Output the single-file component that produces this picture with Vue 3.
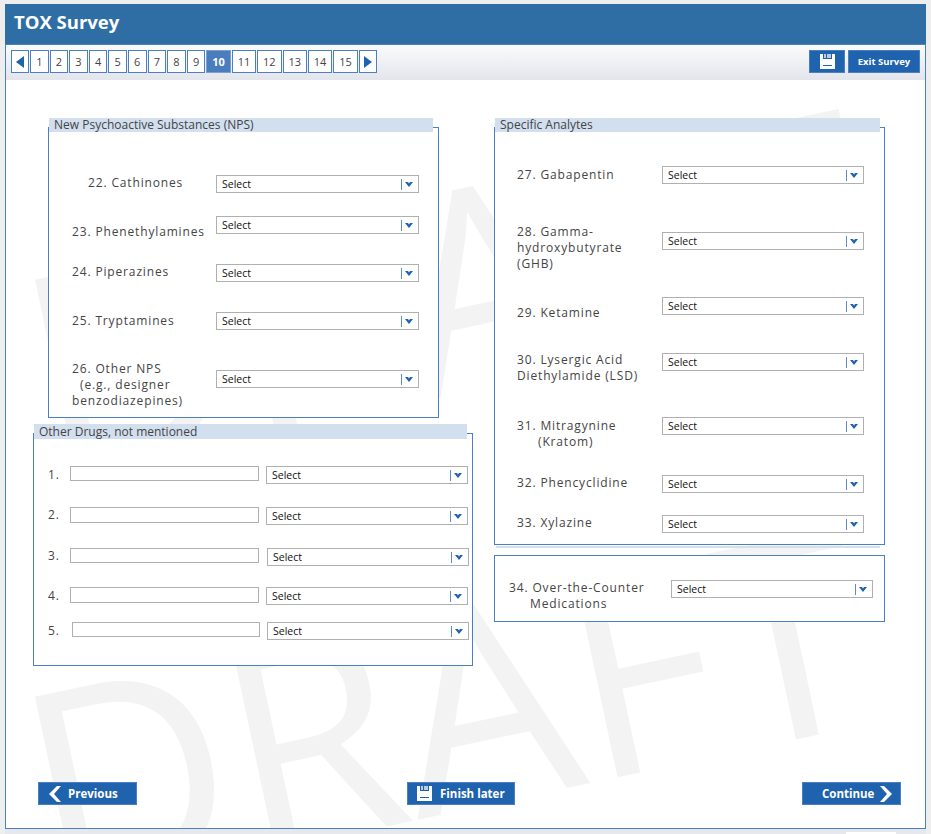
<script setup>
const S = 18
function place(rows, start, h = S) {
  let cur = start
  return rows.map((r) => {
    const lh = (r.lines ? r.lines.length : 1) * 16
    const top = Math.min(r.y, r.ly)
    const bottom = Math.max(r.y + h, r.ly + lh)
    const out = { ...r, gap: top - cur, sTop: r.y - top, lTop: r.ly - top }
    cur = bottom
    return out
  })
}
const nps = place([
  { y: 175, ly: 175, lines: [['22. Cathinones', 39]] },
  { y: 216, ly: 224, lines: [['23. Phenethylamines', 23]] },
  { y: 264, ly: 264, lines: [['24. Piperazines', 23]] },
  { y: 312, ly: 313, lines: [['25. Tryptamines', 23]] },
  { y: 370, ly: 361, lines: [['26. Other NPS', 23], ['(e.g., designer', 31], ['benzodiazepines)', 23]] },
], 132)
const analytes = place([
  { y: 166, ly: 167, lines: [['27. Gabapentin', 22]] },
  { y: 232, ly: 224, lines: [['28. Gamma-', 22], ['hydroxybutyrate', 22], ['(GHB)', 22]] },
  { y: 297, ly: 305, lines: [['29. Ketamine', 22]] },
  { y: 353, ly: 352, lines: [['30. Lysergic Acid', 22], ['Diethylamide (LSD)', 22]] },
  { y: 417, ly: 418, lines: [['31. Mitragynine', 22], ['(Kratom)', 43]] },
  { y: 475, ly: 475, lines: [['32. Phencyclidine', 22]] },
  { y: 515, ly: 515, lines: [['33. Xylazine', 22]] },
], 132)
const others = place([
  { n: '1.', y: 466, ly: 467, ih: 15, ix: 0, sx: 7, iw: 189 },
  { n: '2.', y: 507, ly: 507, ih: 16, ix: 0, sx: 7, iw: 189 },
  { n: '3.', y: 548, ly: 548, ih: 15, ix: 0, sx: 8, iw: 189 },
  { n: '4.', y: 587, ly: 588, ih: 16, ix: 0, sx: 7, iw: 189 },
  { n: '5.', y: 622, ly: 623, ih: 15, ix: 2, sx: 7, iw: 188 },
], 439)
const pages = [1, 2, 3, 4, 5, 6, 7, 8, 9, 10, 11, 12, 13, 14, 15]
</script>

<template>
  <div class="page">
    <div class="frame">
      <header class="head"><h1>TOX Survey</h1></header>
      <div class="tools">
        <nav class="pager">
          <button class="pg arrow" aria-label="Previous page">
            <svg width="8" height="12" viewBox="0 0 8 12"><path d="M8 0V12L0 6Z" fill="#1f62ad" /></svg>
          </button>
          <button
            v-for="p in pages"
            :key="p"
            class="pg"
            :class="{ wide: p > 9, on: p === 10 }"
          >{{ p }}</button>
          <button class="pg arrow" aria-label="Next page">
            <svg width="8" height="12" viewBox="0 0 8 12"><path d="M0 0V12L8 6Z" fill="#1f62ad" /></svg>
          </button>
        </nav>
        <div class="acts">
          <button class="act save" aria-label="Save">
            <svg width="15" height="15" viewBox="0 0 15 15">
              <path d="M0 0H3V5H12V0H15V15H0Z" fill="#fff" />
              <path d="M4 0H6V4H4ZM7 0H11V4H7Z" fill="#b9cce4" />
              <path d="M3 11H12V12H3Z" fill="#1f62ad" />
            </svg>
          </button>
          <button class="act exit">Exit Survey</button>
        </div>
      </div>

      <main class="body">
        <span class="mark mark-a" aria-hidden="true">DRAFT</span>
        <span class="mark mark-b" aria-hidden="true">DRAFT</span>

        <div class="cols">
          <div class="col">
            <section class="box box-nps">
              <div class="legend">New Psychoactive Substances (NPS)</div>
              <div
                v-for="r in nps"
                :key="r.y"
                class="row"
                :style="{ marginTop: r.gap + 'px' }"
              >
                <div class="lab lab-nps" :style="{ marginTop: r.lTop + 'px' }">
                  <div v-for="l in r.lines" :key="l[0]" :style="{ paddingLeft: l[1] + 'px' }">{{ l[0] }}</div>
                </div>
                <div class="sel sel-wide" :style="{ marginTop: r.sTop + 'px' }">
                  <span>Select</span><i class="div"></i>
                  <svg width="8" height="5" viewBox="0 0 8 5"><path d="M0 0H3L4 1.5L5 0H8L4 5Z" fill="#1f62ad" /></svg>
                </div>
              </div>
            </section>

            <section class="box box-other">
              <div class="legend legend-other">Other Drugs, not mentioned</div>
              <div
                v-for="r in others"
                :key="r.n"
                class="row"
                :style="{ marginTop: r.gap + 'px' }"
              >
                <div class="num" :style="{ marginTop: r.lTop + 'px' }">{{ r.n }}</div>
                <input
                  class="txt"
                  type="text"
                  :style="{ height: r.ih + 'px', width: r.iw + 'px', marginLeft: r.ix + 'px', marginTop: r.sTop + 'px' }"
                />
                <div class="sel" :style="{ marginLeft: r.sx + 'px', marginTop: r.sTop + 'px' }">
                  <span>Select</span><i class="div"></i>
                  <svg width="8" height="5" viewBox="0 0 8 5"><path d="M0 0H3L4 1.5L5 0H8L4 5Z" fill="#1f62ad" /></svg>
                </div>
              </div>
            </section>
          </div>

          <div class="col">
            <section class="box box-ana">
              <div class="legend legend-ana">Specific Analytes</div>
              <div
                v-for="r in analytes"
                :key="r.y"
                class="row"
                :style="{ marginTop: r.gap + 'px' }"
              >
                <div class="lab lab-ana" :style="{ marginTop: r.lTop + 'px' }">
                  <div v-for="l in r.lines" :key="l[0]" :style="{ paddingLeft: l[1] + 'px' }">{{ l[0] }}</div>
                </div>
                <div class="sel" :style="{ marginTop: r.sTop + 'px' }">
                  <span>Select</span><i class="div"></i>
                  <svg width="8" height="5" viewBox="0 0 8 5"><path d="M0 0H3L4 1.5L5 0H8L4 5Z" fill="#1f62ad" /></svg>
                </div>
              </div>
            </section>
            <div class="sliver"></div>
            <section class="box box-otc">
              <div class="lab lab-otc">
                <div class="otc1">34. Over-the-Counter</div>
                <div class="otc2">Medications</div>
              </div>
              <div class="sel sel-otc">
                <span>Select</span><i class="div"></i>
                <svg width="8" height="5" viewBox="0 0 8 5"><path d="M0 0H3L4 1.5L5 0H8L4 5Z" fill="#1f62ad" /></svg>
              </div>
            </section>
          </div>
        </div>

        <div class="nav">
          <button class="btn prev">
            <svg width="12" height="16" viewBox="0 0 12 16"><path d="M8 0H12L5 8L12 16H8L0 8Z" fill="#fff" /></svg>
            <span>Previous</span>
          </button>
          <button class="btn later">
            <svg width="15" height="15" viewBox="0 0 15 15">
              <path d="M0 0H3V5H12V0H15V15H0Z" fill="#fff" />
              <path d="M4 0H6V4H4ZM7 0H11V4H7Z" fill="#b9cce4" />
              <path d="M3 11H12V12H3Z" fill="#1f62ad" />
            </svg>
            <span>Finish later</span>
          </button>
          <button class="btn next">
            <span>Continue</span>
            <svg width="12" height="16" viewBox="0 0 12 16"><path d="M4 0H0L7 8L0 16H4L12 8Z" fill="#fff" /></svg>
          </button>
        </div>
      </main>
      <footer class="foot"><i class="tab"></i></footer>
    </div>
  </div>
</template>

<style>
html, body { margin: 0; background: #eeeeee; }
</style>

<style scoped>
.page {
  width: 931px;
  height: 834px;
  overflow: hidden;
  padding: 4px 0 0 5px;
  box-sizing: border-box;
  font-family: "Open Sans", "Liberation Sans", sans-serif;
}
.frame {
  width: 921px;
  height: 830px;
  box-sizing: border-box;
  border-left: 1px solid #4a80c1;
  border-right: 1px solid #4a80c1;
  background: #fff;
  display: flex;
  flex-direction: column;
}
.head {
  height: 40px;
  margin: 0 -1px;
  background: #2e6ea5;
  border-bottom: 1px solid #4a80c1;
  display: flex;
  align-items: center;
  flex: none;
}
.head h1 {
  margin: 0 0 4px 9px;
  font-size: 18.5px;
  font-weight: 700;
  color: #fff;
  line-height: 24px;
}
.tools {
  height: 35px;
  flex: none;
  box-sizing: border-box;
  padding: 5px 5px 0 5px;
  display: flex;
  justify-content: space-between;
  align-items: flex-start;
  background: linear-gradient(#fbfbfc, #e3e5ec);
}
.pager { display: flex; gap: 1px; }
.pg {
  width: 18.6px;
  height: 23px;
  box-sizing: border-box;
  padding: 0;
  border: 1px solid #4a80c1;
  background: #fff;
  color: #444;
  font: 400 11px "Open Sans", sans-serif;
  display: flex;
  align-items: center;
  justify-content: center;
}
.pg.arrow { width: 18px; }
.pg.wide { width: 24.4px; }
.pg.on { background: #4a7dbd; color: #fff; font-weight: 700; border-color: #7f9fcb; }
.acts { display: flex; gap: 3px; }
.act {
  height: 23px;
  box-sizing: border-box;
  padding: 0;
  border: 1px solid #4a80c1;
  background: #1f62ad;
  color: #fff;
  font: 700 9.5px "Open Sans", sans-serif;
  display: flex;
  align-items: center;
  justify-content: center;
}
.save { width: 36px; }
.exit { width: 72px; }

.body {
  position: relative;
  flex: 1;
  overflow: hidden;
  display: flex;
  flex-direction: column;
  background: #fff;
}
.mark {
  position: absolute;
  left: 44px;
  font-size: 280px;
  line-height: 280px;
  font-weight: 400;
  color: #f3f3f3;
  white-space: nowrap;
  transform-origin: 0 249px;
  transform: rotate(-12deg);
}
.mark-a { top: 153px; }
.mark-b { top: 570px; }

.cols {
  position: relative;
  display: grid;
  grid-template-columns: 440px 391px;
  column-gap: 21px;
  padding: 47px 0 0 27px;
  align-items: start;
}
.box {
  box-sizing: border-box;
  border: 1px solid #4a80c1;
  background: #fff;
}
.legend {
  height: 14px;
  margin: -10px 5px 0 0;
  padding-left: 5px;
  background: #d2dfef;
  color: #444;
  font-size: 12px;
  line-height: 14px;
}
.legend-other { height: 15px; line-height: 15px; }
.legend-ana { margin-right: 4px; }
.box-nps { margin-left: 15px; width: 391px; height: 291px; }
.box-other { margin-top: 15px; width: 440px; height: 233px; }
.box-ana { width: 391px; height: 418px; }
.sliver { height: 2px; margin: 1px 5px 0 2px; background: #d2dfef; }
.box-otc {
  margin-top: 7px;
  width: 391px;
  height: 67px;
  display: flex;
  align-items: flex-start;
}
.row { display: flex; align-items: flex-start; }
.lab {
  flex: none;
  font-size: 12px;
  line-height: 16px;
  letter-spacing: 0.85px;
  color: #444;
  white-space: nowrap;
}
.lab-nps { width: 167px; }
.lab-ana { width: 167px; }
.lab-otc { width: 176px; padding-top: 24px; }
.otc1 { padding-left: 14px; }
.otc2 { padding-left: 35px; }
.sel-otc { margin-top: 24px; }
.num {
  width: 36px;
  padding-left: 14px;
  box-sizing: border-box;
  flex: none;
  font-size: 12px;
  line-height: 16px;
  letter-spacing: 0.85px;
  color: #444;
}
.txt {
  flex: none;
  box-sizing: border-box;
  border: 1px solid #b0b0b0;
  background: #fff;
  padding: 0 3px;
  margin: 0;
  outline: none;
}
.sel {
  flex: none;
  box-sizing: border-box;
  width: 202px;
  height: 18px;
  border: 1px solid #b0b0b0;
  background: #fff;
  display: flex;
  align-items: center;
  padding: 0 5px 0 5px;
  font-size: 10.5px;
  color: #111;
}
.sel-wide { width: 203px; }
.sel span { flex: 1; }
.div {
  display: block;
  width: 1px;
  height: 11px;
  background: #5b8ec9;
  margin-right: 3px;
}
.nav {
  position: relative;
  margin-top: auto;
  padding: 0 24px 23px 32px;
  display: flex;
}
.btn {
  height: 23px;
  box-sizing: border-box;
  padding: 0;
  border: 1px solid #4a80c1;
  background: #1f62ad;
  color: #fff;
  font: 700 11.5px "Open Sans", sans-serif;
  display: flex;
  align-items: center;
}
.prev { width: 99px; padding-left: 10px; gap: 7px; }
.later { width: 108px; margin-left: 270px; padding-left: 9px; gap: 8px; }
.next { width: 99px; margin-left: auto; padding-left: 19px; gap: 6px; }
.foot {
  flex: none;
  height: 6px;
  margin: 0 -1px;
  background: #e6e8ee;
  border-top: 1px solid #4a80c1;
  box-sizing: border-box;
  position: relative;
}
.tab {
  position: absolute;
  right: 30px;
  top: 3px;
  width: 50px;
  height: 3px;
  background: #fff;
}
</style>
